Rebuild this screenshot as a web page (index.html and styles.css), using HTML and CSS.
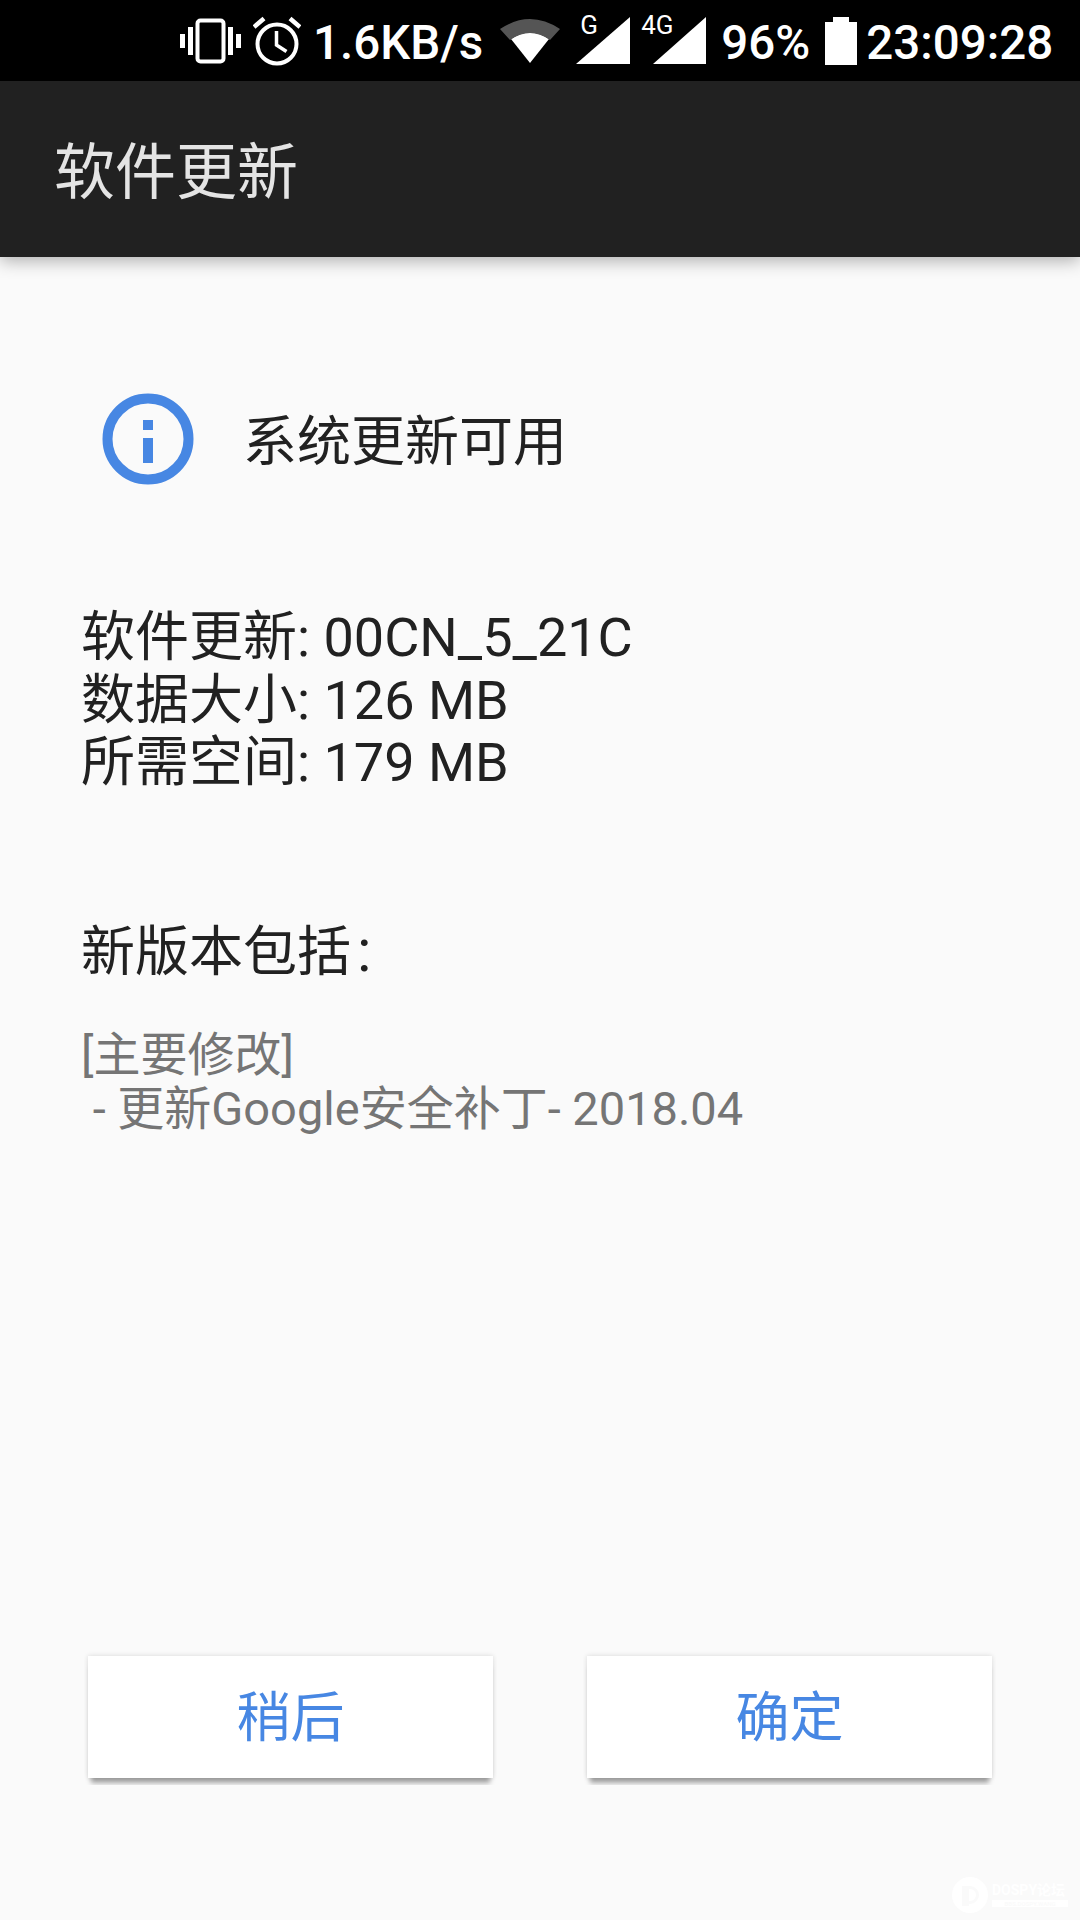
FILE: index.html
```html
<!DOCTYPE html>
<html lang="zh-CN">
<head>
  <meta charset="UTF-8" />
  <meta name="viewport" content="width=device-width, initial-scale=1.0" />
  <title>软件更新</title>
  <link rel="stylesheet" href="styles.css">
</head>
<body>
  <div id="page">
    <div class="status-bar">
      <svg class="icon-vibrate" viewBox="0 0 61 46" width="61" height="46">
        <path fill="#fff" d="M0 16h5v14H0zM8 9h5v28H8zM48 9h5v28h-5zM56 16h5v14h-5z"/>
        <rect x="17.5" y="2.5" width="26" height="41" rx="3" fill="none" stroke="#fff" stroke-width="4"/>
      </svg>
      <svg class="icon-alarm" viewBox="0 0 48 50" width="48" height="50">
        <circle cx="24" cy="28" r="19.5" fill="none" stroke="#fff" stroke-width="4"/>
        <path d="M23.500 15v14l10 6.500" fill="none" stroke="#fff" stroke-width="3.500"/>
        <path d="M1 11L11 2.500M47 11L37 2.500" fill="none" stroke="#fff" stroke-width="4.500"/>
      </svg>
      <span class="status-text speed">1.6KB/s</span>
      <svg class="icon-wifi" viewBox="0 0 60 47" width="60" height="47">
        <path fill="#fff" d="M30 46L11 22Q30 9 49 22z"/>
        <path fill="#555" d="M0 12Q30-8 60 12l-10 11Q30 9 10 23z"/>
      </svg>
      <div class="signal signal-g">
        <span>G</span>
        <svg viewBox="0 0 54 47" width="54" height="47"><path fill="#fff" d="M0 47L54 0v47z"/></svg>
      </div>
      <div class="signal signal-4g">
        <span>4G</span>
        <svg viewBox="0 0 53 47" width="53" height="47"><path fill="#fff" d="M0 47L53 0v47z"/></svg>
      </div>
      <span class="status-text percent">96%</span>
      <svg class="icon-battery" viewBox="0 0 32 48" width="32" height="48">
        <path fill="#fff" d="M8 0h16v5h8v43H0V5h8z"/>
      </svg>
      <span class="status-text clock">23:09:28</span>
    </div>

    <header class="toolbar">
      <h1>软件更新</h1>
    </header>

    <main class="content">
      <div class="notice">
        <svg class="icon-info" viewBox="0 0 92 92" width="92" height="92">
          <circle cx="46" cy="46" r="40.5" fill="none" stroke="#4787e3" stroke-width="10"/>
          <path fill="#4787e3" d="M41 27h10v10H41zM41 45h10v25H41z"/>
        </svg>
        <span>系统更新可用</span>
      </div>

      <div class="details">
        <div>软件更新: 00CN_5_21C</div>
        <div>数据大小: 126 MB</div>
        <div>所需空间: 179 MB</div>
      </div>

      <h2 class="includes">新版本包括<span class="colon">:</span></h2>

      <div class="changes">
        <div>[主要修改]</div>
        <div>&nbsp;- 更新Google安全补丁- 2018.04</div>
      </div>

      <div class="actions">
        <div class="btn-wrap"><button>稍后</button></div>
        <div class="btn-wrap"><button>确定</button></div>
      </div>
    </main>

    <div class="watermark">
      <svg viewBox="0 0 36 36" width="36" height="36">
        <circle cx="18" cy="18" r="18" fill="#fff"/>
        <path fill="#fafafa" d="M10 9h8a9 9 0 0 1 0 18h-1v-3h1a6 6 0 0 0 0-12h-1v17h-7z"/>
      </svg>
      <div class="wm-text">
        <div class="wm-name">DOSPY论坛</div>
        <div class="wm-url">BBS.DOSPY.WANG</div>
      </div>
    </div>
  </div>
</body>
</html>
```

FILE: styles.css
```css
:root {
  --blue: #4787e3;
  --text: #212121;
  --gray: #757575;
  --cjk: Roboto, "Noto Sans CJK SC", sans-serif;
}

* {
  box-sizing: border-box;
  margin: 0;
  padding: 0;
  font-family: var(--cjk);
}

body {
  background: #fafafa;
}

#page {
  position: relative;
  width: 1080px;
  height: 1920px;
  display: flex;
  flex-direction: column;
  overflow: hidden;
}

.status-bar {
  height: 81px;
  background: #000;
  color: #fff;
  display: flex;
  align-items: center;
  padding-left: 180px;
  font-size: 47.5px;
  font-weight: 500;
  line-height: 76px;
}

.status-bar svg {
  flex: none;
}

.status-text {
  padding-top: 5px;
}

.icon-alarm {
  margin-left: 12px;
}

.speed {
  margin-left: 12px;
}

.icon-wifi {
  margin-left: 17px;
  margin-top: -1px;
}

.signal {
  position: relative;
  display: flex;
  margin-top: -1px;
}

.signal span {
  position: absolute;
  top: -5px;
  left: 4px;
  font-size: 26px;
  font-weight: 400;
  line-height: 26px;
}

.signal-g {
  margin-left: 16px;
}

.signal-4g {
  margin-left: 23px;
}

.signal-4g span {
  left: -12px;
}

.percent {
  margin-left: 15px;
}

.icon-battery {
  margin-left: 15px;
}

.clock {
  margin-left: 9px;
}

.toolbar {
  height: 176px;
  background: #212121;
  color: #e4e4e4;
  display: flex;
  align-items: center;
  padding: 0 0 4px 54px;
  box-shadow: 0 4px 16px rgba(0, 0, 0, 0.3);
  position: relative;
}

.toolbar h1 {
  font-size: 61px;
  font-weight: 400;
}

.content {
  flex: 1;
  display: flex;
  flex-direction: column;
  color: var(--text);
}

.notice {
  display: flex;
  align-items: center;
  margin: 136px 0 0 102px;
  font-size: 54px;
  height: 92px;
}

.notice span {
  margin-left: 49px;
  padding-bottom: 4px;
}

.details {
  margin: 122px 0 0 81px;
  font-size: 54px;
  line-height: 62.5px;
}

.includes {
  margin: 121px 0 0 81px;
  font-size: 54px;
  font-weight: 400;
  line-height: 70px;
}

.colon {
  font-size: 60px;
  margin-left: 6px;
}

.changes {
  margin: 40px 0 0 81px;
  font-size: 47px;
  line-height: 54px;
  color: var(--gray);
}

.actions {
  margin-top: auto;
  margin-bottom: 135px;
  padding-left: 84px;
  display: flex;
  gap: 86px;
}

.btn-wrap {
  width: 413px;
  height: 135px;
  padding: 6px 4px 0 4px;
  overflow: hidden;
}

.btn-wrap button {
  display: block;
  width: 405px;
  height: 122px;
  padding-bottom: 8px;
  background: #fff;
  border: none;
  color: var(--blue);
  font-size: 54px;
  box-shadow: 0 0 5px rgba(0, 0, 0, 0.14), 0 8px 5px -3px rgba(0, 0, 0, 0.34);
}

.watermark {
  position: absolute;
  left: 952px;
  top: 1877px;
  display: flex;
  gap: 4px;
  color: #fff;
}

.wm-text {
  padding-top: 5px;
}

.wm-name {
  font-size: 14px;
  line-height: 16px;
  font-weight: 700;
}

.wm-url {
  width: 76px;
  margin-top: 2px;
  background: #fff;
  color: #fafafa;
  text-align: center;
  font-size: 6px;
  line-height: 7px;
  font-weight: 700;
}
```
